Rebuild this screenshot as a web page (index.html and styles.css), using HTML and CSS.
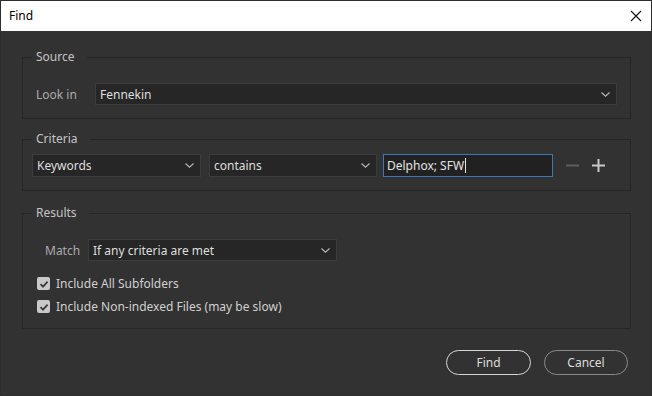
FILE: index.html
```html
<!DOCTYPE html>
<html>
<head>
<meta charset="utf-8">
<link rel="stylesheet" href="styles.css">
</head>
<body>
<div class="window">
  <div class="titlebar">
    <span class="title">Find</span>
    <svg class="close" width="12" height="12" viewBox="0 0 12 12"><path d="M1 1 L11 11 M11 1 L1 11" stroke="#111" stroke-width="1.1" fill="none"/></svg>
  </div>
  <div class="content">
    <fieldset class="group source">
      <legend>Source</legend>
      <div class="inner">
        <div class="row">
          <span class="label look">Look in</span>
          <div class="select grow"><span>Fennekin</span><svg class="chev" width="9" height="5" viewBox="0 0 9 5"><path d="M0.5 0.5 L4.5 4.2 L8.5 0.5" stroke="#b4b4b4" stroke-width="1.2" fill="none"/></svg></div>
        </div>
      </div>
    </fieldset>
    <fieldset class="group criteria">
      <legend>Criteria</legend>
      <div class="inner">
        <div class="row">
          <div class="select w1"><span>Keywords</span><svg class="chev" width="9" height="5" viewBox="0 0 9 5"><path d="M0.5 0.5 L4.5 4.2 L8.5 0.5" stroke="#b4b4b4" stroke-width="1.2" fill="none"/></svg></div>
          <div class="select w2"><span>contains</span><svg class="chev" width="9" height="5" viewBox="0 0 9 5"><path d="M0.5 0.5 L4.5 4.2 L8.5 0.5" stroke="#b4b4b4" stroke-width="1.2" fill="none"/></svg></div>
          <div class="input"><span>Delphox; SFW</span><span class="caret"></span></div>
          <svg class="minus" width="13" height="13" viewBox="0 0 13 13"><path d="M0 6.5 H13" stroke="#5c5c5c" stroke-width="2" fill="none"/></svg>
          <svg class="plus" width="13" height="13" viewBox="0 0 13 13"><path d="M0 6.5 H13 M6.5 0 V13" stroke="#c8c8c8" stroke-width="2" fill="none"/></svg>
        </div>
      </div>
    </fieldset>
    <fieldset class="group results">
      <legend>Results</legend>
      <div class="inner">
        <div class="row">
          <span class="label match">Match</span>
          <div class="select w3"><span>If any criteria are met</span><svg class="chev" width="9" height="5" viewBox="0 0 9 5"><path d="M0.5 0.5 L4.5 4.2 L8.5 0.5" stroke="#b4b4b4" stroke-width="1.2" fill="none"/></svg></div>
        </div>
        <div class="check first"><span class="box"><svg width="12" height="12" viewBox="0 0 12 12"><path d="M2.5 6.2 L5 8.6 L9.6 3.6" stroke="#3a3a3a" stroke-width="1.8" fill="none"/></svg></span><span class="ctext">Include All Subfolders</span></div>
        <div class="check"><span class="box"><svg width="12" height="12" viewBox="0 0 12 12"><path d="M2.5 6.2 L5 8.6 L9.6 3.6" stroke="#3a3a3a" stroke-width="1.8" fill="none"/></svg></span><span class="ctext">Include Non-indexed Files (may be slow)</span></div>
      </div>
    </fieldset>
    <div class="buttons">
      <div class="btn primary">Find</div>
      <div class="btn">Cancel</div>
    </div>
  </div>
</div>
</body>
</html>
```
FILE: styles.css
```css
* { box-sizing: border-box; }
html, body { margin: 0; padding: 0; }
body {
  width: 652px;
  height: 396px;
  font-family: "Noto Sans", "Open Sans", sans-serif;
  font-size: 12px;
  background: #323232;
}
.window {
  width: 652px;
  height: 396px;
  border: 1px solid #2e2e2e;
  background: #323232;
  display: flex;
  flex-direction: column;
}
.titlebar {
  height: 30px;
  flex: none;
  background: #ffffff;
  display: flex;
  align-items: center;
  justify-content: space-between;
  padding: 0 9px 0 8px;
}
.title {
  color: #000;
  font-size: 12px;
  line-height: 16px;
}
.close { display: block; }
.content {
  padding: 18px 20px 0 21px;
  display: flex;
  flex-direction: column;
}
.group {
  margin: 0;
  border: 1px solid #262626;
  padding: 0;
  min-width: 0;
}
.group legend {
  margin-left: 9px;
  padding: 0 12px 0 4px;
  line-height: 16px;
  color: #c4c4c4;
}
.source .inner { padding: 18px 13px 13px 13px; }
.criteria { margin-top: 12px; }
.criteria .inner { padding: 7px 9px 13px 9px; }
.results { margin-top: 14px; }
.results .inner { padding: 18px 13px 15px 14px; }
.row {
  display: flex;
  align-items: center;
}
.label { color: #ababab; }
.look { width: 59px; flex: none; }
.match { width: 51px; flex: none; padding-left: 8px; }
.select {
  height: 22px;
  background: #262626;
  border: 1px solid #3c3c3c;
  display: flex;
  align-items: center;
  justify-content: space-between;
  padding: 0 6px 0 4px;
  color: #dedede;
  flex: none;
}
.select.grow { flex: 1; }
.chev { display: block; }
.w1 { width: 169px; height: 23px; }
.w2 { width: 168px; height: 23px; margin-left: 8px; }
.w3 { width: 249px; }
.input {
  width: 170px;
  height: 23px;
  margin-left: 6px;
  background: #212121;
  border: 1px solid #3a78b8;
  display: flex;
  align-items: center;
  padding: 0 3px;
  color: #e4e4e4;
  flex: none;
}
.caret {
  width: 1px;
  height: 15px;
  background: #e4e4e4;
  margin-left: 1px;
}
.minus { margin-left: 13px; display: block; }
.plus { margin-left: 13px; display: block; }
.check {
  display: flex;
  align-items: center;
  height: 13px;
}
.check.first { margin-top: 16px; }
.check + .check { margin-top: 10px; }
.box {
  width: 13px;
  height: 13px;
  background: #c9c9c9;
  border-radius: 2px;
  display: flex;
  align-items: center;
  justify-content: center;
  flex: none;
}
.box svg { display: block; }
.ctext { margin-left: 6px; color: #d0d0d0; }
.buttons {
  display: flex;
  justify-content: flex-end;
  gap: 13px;
  margin-top: 21px;
  padding-right: 3px;
}
.btn {
  width: 84px;
  height: 25px;
  border: 1px solid #8a8a8a;
  border-radius: 13px;
  display: flex;
  align-items: center;
  justify-content: center;
  color: #dcdcdc;
}
.btn.primary {
  width: 85px;
  border: 1.5px solid #d6d6d6;
}
```
